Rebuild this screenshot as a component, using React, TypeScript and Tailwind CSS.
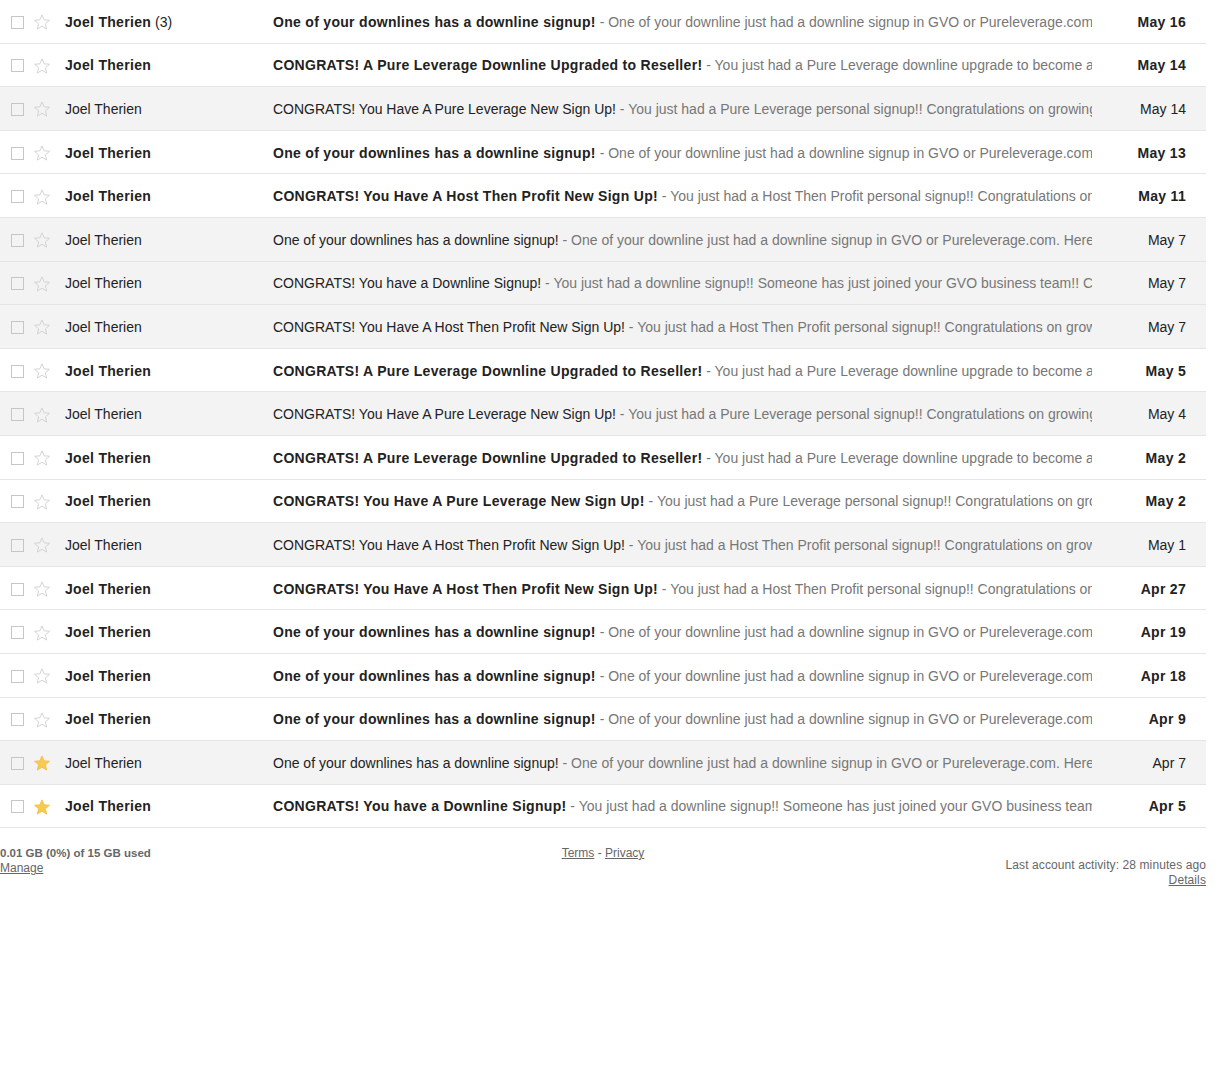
import React from "react";

type Mail = {
  count?: number;
  subject: string;
  snippet: string;
  date: string;
  unread: boolean;
  starred?: boolean;
};

const DOWN = "One of your downlines has a downline signup!";
const DOWN_SNIP = "One of your downline just had a downline signup in GVO or Pureleverage.com. Here are the details";
const UPG = "CONGRATS! A Pure Leverage Downline Upgraded to Reseller!";
const UPG_SNIP = "You just had a Pure Leverage downline upgrade to become a Reseller!";
const PL = "CONGRATS! You Have A Pure Leverage New Sign Up!";
const PL_SNIP = "You just had a Pure Leverage personal signup!! Congratulations on growing your team";
const HTP = "CONGRATS! You Have A Host Then Profit New Sign Up!";
const HTP_SNIP = "You just had a Host Then Profit personal signup!! Congratulations on growing your team";
const DL = "CONGRATS! You have a Downline Signup!";
const DL_SNIP = "You just had a downline signup!! Someone has just joined your GVO business team!! Congratulations";

const MAILS: Mail[] = [
  { count: 3, subject: DOWN, snippet: DOWN_SNIP, date: "May 16", unread: true },
  { subject: UPG, snippet: UPG_SNIP, date: "May 14", unread: true },
  { subject: PL, snippet: PL_SNIP, date: "May 14", unread: false },
  { subject: DOWN, snippet: DOWN_SNIP, date: "May 13", unread: true },
  { subject: HTP, snippet: HTP_SNIP, date: "May 11", unread: true },
  { subject: DOWN, snippet: DOWN_SNIP, date: "May 7", unread: false },
  { subject: DL, snippet: DL_SNIP, date: "May 7", unread: false },
  { subject: HTP, snippet: HTP_SNIP, date: "May 7", unread: false },
  { subject: UPG, snippet: UPG_SNIP, date: "May 5", unread: true },
  { subject: PL, snippet: PL_SNIP, date: "May 4", unread: false },
  { subject: UPG, snippet: UPG_SNIP, date: "May 2", unread: true },
  { subject: PL, snippet: PL_SNIP, date: "May 2", unread: true },
  { subject: HTP, snippet: HTP_SNIP, date: "May 1", unread: false },
  { subject: HTP, snippet: HTP_SNIP, date: "Apr 27", unread: true },
  { subject: DOWN, snippet: DOWN_SNIP, date: "Apr 19", unread: true },
  { subject: DOWN, snippet: DOWN_SNIP, date: "Apr 18", unread: true },
  { subject: DOWN, snippet: DOWN_SNIP, date: "Apr 9", unread: true },
  { subject: DOWN, snippet: DOWN_SNIP, date: "Apr 7", unread: false, starred: true },
  { subject: DL, snippet: DL_SNIP, date: "Apr 5", unread: true, starred: true },
];

function Star({ on }: { on?: boolean }) {
  return (
    <svg width="18" height="18" viewBox="0 0 24 24" className="shrink-0">
      <path
        d="M12 2.5l2.85 6.6 7.15.6-5.45 4.7 1.65 7-6.2-3.75-6.2 3.75 1.65-7L2 9.7l7.15-.6z"
        fill={on ? "#f7cb4d" : "none"}
        stroke={on ? "#f0c24a" : "#cfcfcf"}
        strokeWidth="1.2"
        strokeLinejoin="round"
      />
    </svg>
  );
}

function Row({ m }: { m: Mail }) {
  const weight = m.unread ? "font-bold tracking-[0.3px]" : "font-normal";
  return (
    <div
      className={`flex h-[43.6px] items-center border-b border-[#e5e5e5] pt-[2px] text-[14px] ${
        m.unread ? "bg-white" : "bg-[#f3f3f3]"
      }`}
    >
      <div className="ml-[11px] h-[13px] w-[13px] shrink-0 border border-[#c6c6c6] bg-transparent" />
      <div className="ml-[9px] flex w-[18px] items-center">
        <Star on={m.starred} />
      </div>
      <div className={`ml-[14px] w-[208px] shrink-0 truncate text-[#222] ${weight}`}>
        Joel Therien
        {m.count ? <span className="font-normal tracking-normal"> ({m.count})</span> : null}
      </div>
      <div className="w-[819px] shrink-0 overflow-hidden whitespace-nowrap">
        <span className={`text-[#222] ${weight}`}>{m.subject}</span>
        <span className="text-[#777]"> - {m.snippet}</span>
      </div>
      <div className={`flex-1 pr-5 text-right text-[#222] ${weight}`}>{m.date}</div>
    </div>
  );
}

export default function App() {
  return (
    <div className="min-h-[1066px] w-[1206px] bg-white font-['Liberation_Sans',Arial,sans-serif]">
      <div>
        {MAILS.map((m, i) => (
          <Row key={i} m={m} />
        ))}
      </div>
      <div className="flex pt-[18px] text-[12px] text-[#666]">
        <div className="w-[402px] leading-[15px]">
          <div className="text-[11.5px] font-bold">0.01 GB (0%) of 15 GB used</div>
          <a className="underline">Manage</a>
        </div>
        <div className="w-[402px] text-center leading-[15px]">
          <a className="underline">Terms</a> - <a className="underline">Privacy</a>
        </div>
        <div className="w-[402px] pt-[12px] text-right leading-[15px] tracking-[0.1px]">
          <div>Last account activity: 28 minutes ago</div>
          <a className="underline">Details</a>
        </div>
      </div>
    </div>
  );
}
